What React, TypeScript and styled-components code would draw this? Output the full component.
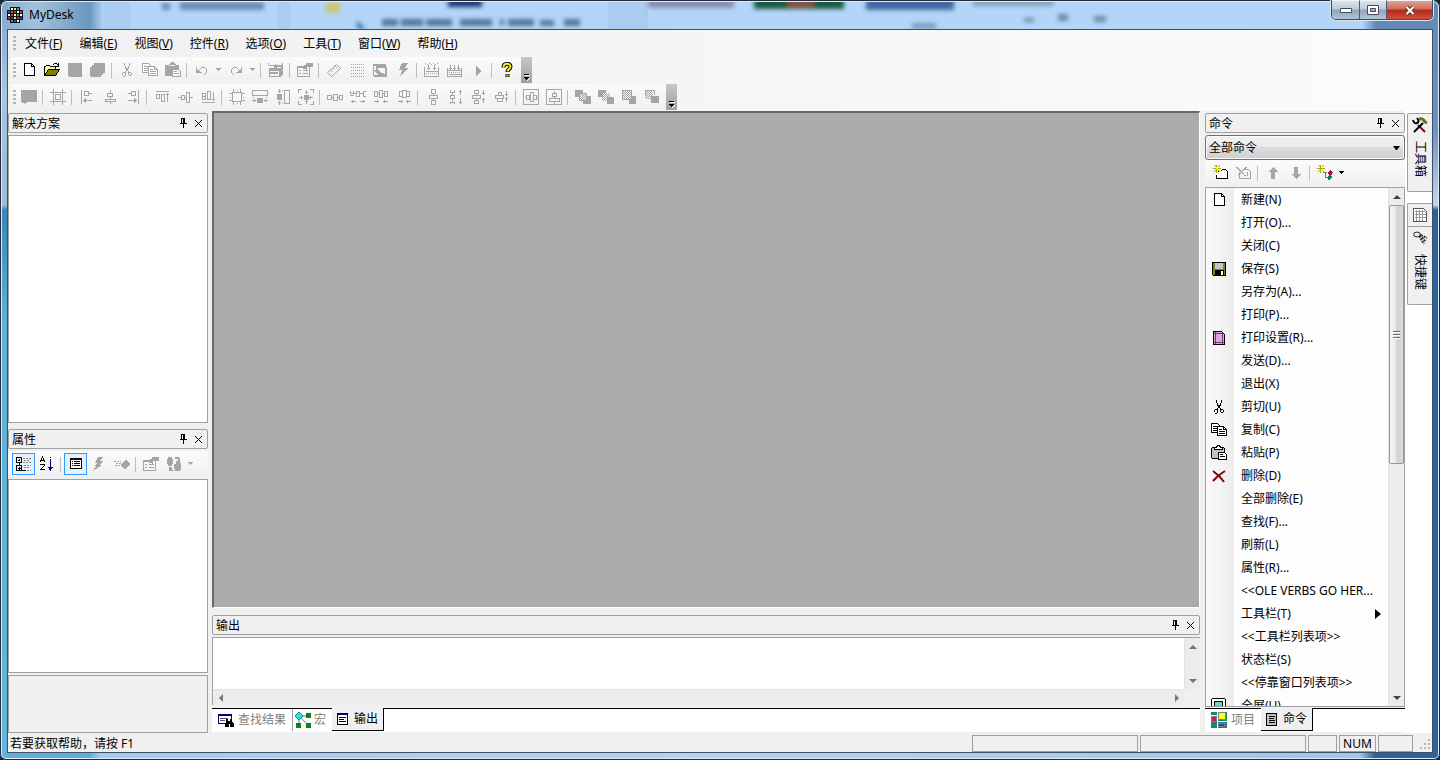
import React, { ReactNode } from 'react';
import styled, { createGlobalStyle, css } from 'styled-components';

const GlobalStyle = createGlobalStyle`
  * { box-sizing: border-box; }
  body {
    margin: 0;
    overflow: hidden;
    background: #16243a;
    color: #000;
    font: 12px/16px "Noto Sans", "Noto Sans CJK SC", sans-serif;
  }
  button, select, textarea { font: inherit; color: inherit; }
  button { padding: 0; border: 0; background: none; }
`;

/* ---------- glyphs, drawn on a 16px grid ---------- */

const newDoc = (
  <>
    <path fill="#fff" d="M3.5 1.5h7l3 3v9h-10z" />
    <path d="M10.5 1.5v3h3" />
  </>
);

const handle = 'M.5 6.5h4v4h-4z M5 8.5h1 M6.5 5.5h4v6h-4z M11 8.5h1 M12.5 6.5h3v4h-3z';
const checker = (x: number, y: number) => {
  let d = '';
  for (let r = 0; r < 8; r++) for (let c = r % 2; c < 8; c += 2) d += `M${x + c} ${y + r}h1v1h-1z`;
  return <path d={d} fill="currentColor" stroke="none" />;
};

const glyphs: Record<string, ReactNode> = {
  app: (
    <>
      <path fill="#101018" stroke="none" d="M3 0h10v3h3v10h-3v3h-10v-3h-3v-10h3z" />
      <path fill="#fff" stroke="none" d="M4 1h2v2h-2z M1 7h2v2h-2z M7 7h2v2h-2z M13 7h2v2h-2z M10 13h2v2h-2z M10 4h2v2h-2z" />
      <path fill="#e3262a" stroke="none" d="M7 4h2v2h-2z M13 4h2v2h-2z M4 7h2v2h-2z M10 10h2v2h-2z M1 10h2v2h-2z" />
      <path fill="#2b3fe0" stroke="none" d="M1 4h2v2h-2z M4 10h2v2h-2z M13 10h2v2h-2z M7 13h2v2h-2z" />
      <path fill="#22b14c" stroke="none" d="M10 1h2v2h-2z M4 4h2v2h-2z M10 7h2v2h-2z M4 13h2v2h-2z" />
      <path fill="#f4e53a" stroke="none" d="M7 1h2v2h-2z M7 10h2v2h-2z" />
    </>
  ),
  newDoc,
  open: (
    <>
      <path fill="#ffff9a" d="M0.5 13.5v-9h1l1-1h3l1 1h5v3" />
      <path fill="#808000" d="M0.5 13.5l4-6h11l-4 6z" />
      <path d="M9 2.5h1 M10 1.5h3 M13 2.5h1 M14.5 1v4 M12 4.5h3" />
    </>
  ),
  save: <path fill="currentColor" stroke="none" d="M1 1h14v14h-13l-1-1z" />,
  saveAll: <path fill="currentColor" stroke="none" d="M4 1h11v10h-2v2h-2v2h-10l-1-1v-9h2v-2h2z" />,
  cut: (
    <path d="M5.5 1v3 M10.5 1v3 M6.5 4v3 M9.5 4v3 M7.5 6v3 M8.5 6v3 M6.5 8.5v2 M9.5 8.5v2 M3.5 11v2 M4 10.5h2 M6.5 11v3 M4 14.5h2 M9.5 11v2 M10 10.5h2 M12.5 11v2 M10 13.5h2" />
  ),
  copy: (
    <>
      <path fill="#fff" d="M0.5 1.5h6l2 2v7h-8z" />
      <path d="M2 4.5h4 M2 6.5h4 M2 8.5h4" />
      <path fill="#fff" d="M6.5 4.5h6l3 3v6h-9z" />
      <path d="M12.5 4.5v3h3 M8 7.5h3 M8 9.5h6 M8 11.5h6" />
    </>
  ),
  paste: (
    <>
      <path fill="#c3c3b8" d="M0.5 3.5l1-1h11l1 1v10h-12l-1-1z" />
      <path fill="#fff" d="M3.5 4.5v-2h2l1-2h2l1 2h2v2z" />
      <path fill="#fff" d="M7.5 7.5h6l2 2v5h-8z" />
      <path d="M9 9.5h3 M9 11.5h5" />
    </>
  ),
  pasteOff: (
    <>
      <path fill="currentColor" stroke="none" d="M0 3h4l2-3h3l2 3h3v4h-7v7h-7z" />
      <path fill="#f6f6f6" stroke="none" d="M4 3h6v1h-6z" />
      <path fill="#f6f6f6" d="M7.5 7.5h6l2 2v5h-8z" />
      <path d="M9 9.5h3 M9 11.5h5" />
    </>
  ),
  undo: <path d="M2.5 5v6 M2 10.5h6 M3 9.5h3 M3.5 8v2 M4 8.5h1 M5 7.5h1 M6 6.5h1 M7 5.5h4 M11 6.5h1 M12.5 7v4 M11 11.5h1 M10 12.5h1" />,
  redo: <path d="M13.5 5v6 M8 10.5h6 M10 9.5h3 M12.5 8v2 M11 8.5h1 M10 7.5h1 M9 6.5h1 M5 5.5h4 M4 6.5h1 M3.5 7v4 M4 11.5h1 M5 12.5h1" />,
  drop: <path fill="currentColor" stroke="none" d="M0 6h5v1h-1v1h-1v1h-1v-1h-1v-1h-1z" />,
  deploy: (
    <>
      <path d="M.5 1v2 M1 3.5h6 M7.5 2v3 M14.5 1v6" />
      <path fill="currentColor" stroke="none" d="M6 3h9v1h-1v1h-5v1h-3z M1 6h11l3-2v3l-2 2h-12z M1 9h1v6h-1z M2 14h9v1h-9z M11 9h4v3l-2 3h-2z" />
      <path fill="currentColor" stroke="none" d="M2 10h8v2h-8z" />
    </>
  ),
  props: (
    <>
      <path d="M.5 4.5h12v10h-12z M1 5.5h6 M2 8.5h2 M6 8.5h5 M2 11.5h2 M6 11.5h5" />
      <path fill="currentColor" stroke="none" d="M5 4h2v-1h2v-2h7v4h-6v3h-1v-1h-3z" />
    </>
  ),
  ruler: <path shapeRendering="auto" d="M1.5 10.5l9-8 4 4-9 8z M4.5 8l2 2 M7 6l1.5 1.5 M9 4l2 2" />,
  dots: <path strokeDasharray="1 1" d="M2 2.5h13 M2 5.5h13 M2 8.5h13 M2 11.5h13 M2 14.5h13" />,
  swap: (
    <>
      <path fill="currentColor" stroke="none" d="M1 2h13v3h1v10h-13l-1-3z" />
      <path fill="#f6f6f6" stroke="none" d="M2 4h2v4h-2z M6 6h7v6l-3-1-4-3z M2 9l4 4h-4z" />
    </>
  ),
  bolt: <path fill="currentColor" stroke="none" d="M7 1h6l-3 5h3l-8 9 2-7h-3z" />,
  build: (
    <path d="M1 1.5h1 M5 1.5h1 M9 1.5h1 M13 1.5h1 M3 2.5h1 M7 2.5h1 M11 2.5h1 M.5 5v9.5h14v-9.5 M4.5 3v5 M3 6.5h3 M10.5 3v5 M9 6.5h3 M2 9.5h12 M2 11.5h1 M4 11.5h1 M6 11.5h1 M8 11.5h1 M10 11.5h1 M12 11.5h1" />
  ),
  rebuild: (
    <path d="M.5 6v8.5h14v-8.5 M3.5 3v5 M2 6.5h3 M7.5 3v5 M6 6.5h3 M11.5 3v5 M10 6.5h3 M1 8.5h14 M2 10.5h1 M4 10.5h1 M6 10.5h1 M8 10.5h1 M10 10.5h1 M12 10.5h1 M2 12.5h12" />
  ),
  play: <path fill="currentColor" stroke="none" d="M6 4l5 5-5 5z" />,
  help: (
    <>
      <path shapeRendering="auto" strokeWidth="4" d="M4.5 5.5c0-5 7-4.5 7-1 0 2.5-3 2.5-3 5.5 M8.5 12v3" />
      <path shapeRendering="auto" stroke="#ffee20" strokeWidth="2" d="M4.5 5.5c0-5 7-4.5 7-1 0 2.5-3 2.5-3 5 M8.5 12.5v2" />
    </>
  ),
  comment: <path fill="currentColor" stroke="none" d="M0 1h16v12h-10v1h-2v1h-1v-1h-2v-1h-1z" />,
  grid: <path d="M3.5 0v16 M12.5 0v16 M0 3.5h16 M0 12.5h16 M5.5 5.5h5v5h-5z" />,
  left: <path d="M2.5 1v14 M5.5 2.5h4v4h-4z M9 4.5h4 M4 11.5h9 M5.5 10v3 M6.5 9v5" />,
  center: <path d="M8.5 1v3 M5.5 4.5h5v3h-5z M8.5 8v2 M3.5 10.5h10v2h-10z M8.5 13v2" />,
  right: <path d="M13.5 1v14 M6.5 2.5h4v4h-4z M3 4.5h4 M3 11.5h9 M10.5 10v3 M9.5 9v5" />,
  top: <path d="M2 2.5h13 M2.5 5.5h3v4h-3z M7.5 5.5h3v7h-3z M13.5 4v9 M12 5.5h3" />,
  middle: <path d="M1 8.5h3 M4.5 6.5h3v4h-3z M8 8.5h1 M9.5 3.5h3v10h-3z M13 8.5h3" />,
  bottom: <path d="M2 13.5h13 M2.5 4.5h3v6h-3z M3 7.5h2 M7.5 2.5h3v8h-3z M13.5 3v9 M12 10.5h3" />,
  sizeGrid: <path d="M4.5 0v3 M11.5 0v3 M4.5 13v3 M11.5 13v3 M0 4.5h3 M13 4.5h3 M0 11.5h3 M13 11.5h3 M8 1.5h1 M8 14.5h1 M1 8.5h1 M14 8.5h1 M3.5 3.5h9v9h-9z" />,
  sameW: (
    <>
      <path d="M.5 1.5h15v5h-15z M1.5 8v1 M14.5 8v1 M0 11.5h4 M12 11.5h4 M2.5 10v3 M13.5 10v3" />
      <path fill="currentColor" stroke="none" d="M5 9h6v5h-6z" />
    </>
  ),
  sameH: (
    <>
      <path d="M9.5 1.5h5v13h-5z M7 1.5h1 M7 14.5h1 M4.5 0v4 M4.5 12v4 M3 2.5h3 M3 13.5h3" />
      <path fill="currentColor" stroke="none" d="M2 5h5v6h-5z" />
    </>
  ),
  sameBoth: (
    <>
      <path d="M.5 4v-3.5h3.5 M12 .5h3.5v3.5 M.5 12v3.5h3.5 M12 15.5h3.5v-3.5 M8.5 1v4 M7 3.5h3 M8.5 11v4 M7 12.5h3 M1 8.5h4 M3.5 7v3 M11 8.5h4 M12.5 7v3" />
      <path fill="currentColor" stroke="none" d="M6 6h5v5h-5z" />
    </>
  ),
  hEqual: <path d={handle} />,
  hMore: <path d="M.5 2v2h3v-2 M.5 7v-1h3v1 M3 4.5h3 M6.5 2.5h3v5h-3z M10 4.5h3 M15.5 2.5h-2v5h2 M1 12.500h5 M2.500 11v3 M10 12.500h5 M13.500 11v3" />,
  hLess: <path d="M1.5 2.5h3v5h-3z M5 4.5h1 M6.5 1.5h3v7h-3z M10 4.5h1 M11.5 2.5h3v5h-3z M1 12.5h5 M4.5 11v3 M10 12.5h5 M11.5 11v3" />,
  hNone: <path d="M3.5 2.5h3v5h-3z M6.5 1.5h4v7h-4z M10.5 2.5h3v5h-3z M2 12.5h5 M5.5 11v3 M10 12.5h5 M11.5 11v3" />,
  vEqual: <path d="M6.5 .5h4v4h-4z M8.5 5v1 M4.5 6.5h8v3h-8z M8.5 10v1 M6.5 11.5h4v4h-4z" />,
  vMore: <path d="M2.5 1v2h4v-2 M4.5 3v3 M2.5 6.5h4v3h-4z M4.5 10v3 M2.5 15v-2h4v2 M12.5 1v5 M11 2.5h3 M12.5 9v6 M11 13.5h3" />,
  vLess: <path d="M3.5 1.5h4v3h-4z M5.5 5v1 M1.5 6.5h8v3h-8z M5.5 10v1 M3.5 11.5h4v3h-4z M12.5 1v5 M11 4.5h3 M12.5 9v5 M11 10.5h3" />,
  vNone: <path d="M4.5 3.5h3v3h-3z M1.5 6.5h8v3h-8z M3.5 9.5h5v3h-5z M12.5 2v5 M11 5.5h3 M12.5 8v5 M11 9.5h3" />,
  midH: <path d="M.5 .5h15v15h-15z M2 8.5h1 M3.5 6.5h3v4h-3z M7.5 3.5h3v9h-3z M11 6.5h2v4h-2 M13 8.5h2" />,
  midV: <path d="M.5 .5h15v15h-15z M8.5 2v2 M6.5 4.5h4v3h-4z M8.5 8v1 M3.5 9.5h10v3h-10z M8.5 13v2" />,
  front: (
    <>
      <path fill="currentColor" stroke="none" d="M0 1h8v3h-4v4h-4z M12 7h4v8h-8v-3h4z" />
      <path d="M4.5 4.5h7v7h-7z" />
      {checker(4, 4)}
    </>
  ),
  forward: (
    <>
      <path fill="currentColor" stroke="none" d="M0 1h8v3h-3v4h-5z M9 8h7v7h-7z" />
      {checker(4, 4)}
    </>
  ),
  backward: (
    <>
      <path fill="currentColor" stroke="none" d="M11 7h4v8h-7v-4h3z" />
      <path d="M1.5 1.5h9v9h-9z" />
      {checker(2, 2)}
    </>
  ),
  back: (
    <>
      <path fill="currentColor" stroke="none" d="M7 7h8v7h-8z" />
      <path d="M1.5 6v-4.5h9v4.5" />
      {checker(1, 2)}
    </>
  ),
  pin: <path d="M5.5 2v6 M5 2.5h4 M7.5 2v6 M8.5 2v6 M4 7.5h7 M7.5 8v4" />,
  close: <path shapeRendering="auto" strokeWidth="1" d="M4 4l7 7M11 4l-7 7" />,
  category: (
    <>
      <path d="M.5 1.5h5v5h-5z M2 4.5h2 M3.5 3v2 M3.5 7v2 M.5 9.5h5v5h-5z M2 12.5h3 M3.5 11v3 M6 14.5h4" />
      <path stroke="#888" strokeDasharray="2 1" d="M7 2.5h8 M8 4.5h6 M7 6.5h8 M8 9.5h7 M8 11.5h6 M11 14.5h4" />
    </>
  ),
  sort: (
    <>
      <path d="M3.5 0v2 M2.5 2v2 M4.5 2v2 M1.5 4v2 M5.5 4v2 M2 4.5h3 M1 8.5h5 M5 9.5h1 M4 10.5h1 M3 11.5h1 M2 12.5h1 M1 13.5h5" />
      <path stroke="#000080" d="M11.5 1v1 M11.5 3v12 M9 11.5h5 M10 12.5h3 M10.5 12v2" />
    </>
  ),
  sheet: (
    <>
      <path fill="#fff" d="M2.5 2.5h11v10h-11z" />
      <path stroke="#000080" d="M2 3.5h12" />
      <path d="M4 5.5h1 M4 7.5h1 M4 9.5h1 M6 5.5h6 M6 7.5h6 M6 9.5h6" />
    </>
  ),
  bolts: <path fill="currentColor" stroke="none" d="M7 1h5l-4 4h5l-5 4h3l-9 6 3-5h-2l3-3h-2z" />,
  event: (
    <>
      <path fill="currentColor" stroke="none" d="M7 8l5-5 4 5-4 5h-2z" />
      <path strokeDasharray="2 1" d="M0 5.5h7 M2 7.5h5 M1 9.5h7" />
    </>
  ),
  peers: <path fill="currentColor" stroke="none" d="M2 1h4v2h1v5h-1v2h-4v-2h-1v-5h1z M10 5h4v2h1v7h-1v1h-5v-2h-1v-5h2z M9 1h4v1h1v3h-2v-2h-3z M3 11h3v3h2v1h-5z" />,
  newCmd: (
    <>
      <path fill="#fff" d="M4.5 6.5h1 M7.5 6.5l2-2h3l2 2v7h-11v-4" />
      <path stroke="#a8a800" d="M3.5 0v8 M0 3.5h8 M1 .5h1 M2 1.5h1 M5 1.5h1 M6 .5h1 M1 6.5h1 M2 5.5h1 M5 5.5h1 M6 6.5h1" />
      <path stroke="#ffff30" d="M3 3.5h2 M3.5 2v1 M5 2.5h1" />
    </>
  ),
  delCmd: <path d="M3.5 6.5v7h11v-7l-2-2h-4 M0 2.5h2 M1 3.5h2 M2 4.5h2 M3 5.5h2 M4 6.5h2 M5 7.5h2 M6 8.5h2 M8 10.5h2 M9 2.5h2 M8 3.5h2 M7 4.5h2 M6 5.5h2 M3 8.5h2 M2 9.5h2 M11 7v4" />,
  up: <path fill="currentColor" stroke="none" d="M8 2l5 5h-3v7h-4v-7h-3z" />,
  down: <path fill="currentColor" stroke="none" d="M6 2h4v7h3l-5 5-5-5h3z" />,
  magic: (
    <>
      <path stroke="#a8a800" d="M3.5 0v8 M0 3.5h8 M1 .5h1 M2 1.5h1 M5 1.5h1 M6 .5h1 M1 6.5h1 M2 5.5h1 M5 5.5h1 M6 6.5h1" />
      <path stroke="#777" d="M6 7.5h4 M8.5 8v4h2" />
      <path fill="#b01030" stroke="none" d="M11 8l2-3 3 2-2 4-2-1z" />
      <path fill="#107860" stroke="none" d="M10 12l3-2 2 2-3 4z" />
    </>
  ),
  floppy: (
    <>
      <path fill="#808020" d="M1.5 1.5h13v13h-12l-1-1z" />
      <path fill="#c4c4c4" stroke="none" d="M4 2h8v6h-8z" />
      <path fill="#000" stroke="none" d="M4 9h9v6h-9z" />
      <path fill="#fff" stroke="none" d="M10 10h2v4h-2z" />
    </>
  ),
  pageSetup: (
    <>
      <path fill="#d8a8d8" d="M2.5 1.5h8l3 3v10h-11z" />
      <path stroke="#803080" d="M4.5 2v12 M11.5 3v11 M3 3.5h8 M3 12.5h10" />
    </>
  ),
  remove: <path shapeRendering="auto" stroke="#800000" strokeWidth="2" d="M2 3q7 5 11 11M14 3q-7 4-12 10" />,
  screen: (
    <>
      <path fill="#fff" d="M.5 1.5l1-1h12l1 1v13h-14z" />
      <path fill="#60d8c8" d="M3.5 3.5h8v7h-8z" />
    </>
  ),
  tools: (
    <>
      <path shapeRendering="auto" stroke="#800000" strokeWidth="2" d="M6 8l7 7" />
      <path shapeRendering="auto" strokeWidth="2" d="M1 3q1 4 4 3t0-5 M2 15l9-9" />
      <path shapeRendering="auto" stroke="#707020" strokeWidth="3" d="M7 2q4-1 6 3l2 1" />
    </>
  ),
  gridPage: (
    <>
      <path stroke="#555" fill="#fff" d="M1.5 1.5h10l3 3v10h-13z" />
      <path stroke="#999" d="M3 4.5h10 M3 7.5h11 M3 10.5h11 M4.5 3v11 M7.5 3v11 M10.5 3v11" />
    </>
  ),
  keys: (
    <>
      <path shapeRendering="auto" stroke="#333" d="M2 3l3-1 3 1v3l-3 1-3-1z" />
      <path shapeRendering="auto" stroke="#333" strokeWidth="2" strokeDasharray="2 1" d="M7 6l5 8 M8 5l6 7 M9 5l6 3" />
    </>
  ),
  find: (
    <>
      <path fill="#fff" stroke="#000080" d="M.5 2.5h13v9h-13z M0 3.5h14" />
      <path stroke="#555" d="M2 6.5h8 M2 8.5h5" />
      <path fill="#000" stroke="none" d="M8 7h2v2h2v-2h2v3h1v1h1v4h-4v-3h-1v3h-4v-4h1z" />
    </>
  ),
  macro: (
    <>
      <path stroke="#777" shapeRendering="auto" d="M4 4h9M4 4v10M4 4l9 9" />
      <path fill="#20e8e8" stroke="#108888" shapeRendering="auto" d="M4 0l4 4-4 4-4-4z" />
      <path fill="#108018" stroke="none" d="M11 1h5v5h-5z M11 11h5v5h-5z M1 11h5v5h-5z" />
    </>
  ),
  output: (
    <>
      <path fill="#fff" d="M2.5 2.5h10v11h-10z" />
      <path stroke="#000080" d="M2 3.5h11" />
      <path d="M4 6.5h7 M4 8.5h5 M4 10.5h7" />
    </>
  ),
  project: (
    <>
      <path fill="#208078" stroke="none" d="M0 0h16v16h-16z" />
      <path fill="#fff" stroke="none" d="M0 3h7v1h-7z M6 0h1v16h-1z M7 9h9v1h-9z" />
      <path fill="#e01050" d="M.5 4.5h5v5h-5z" />
      <path fill="#ffff20" d="M7.5 .5h7v7h-7z" />
      <path fill="#2040e0" d="M7.5 11.5h6v3h-6z" />
    </>
  ),
  command: (
    <>
      <path fill="#c0c0c0" d="M2.5 2.5h10v12h-10z" />
      <path d="M5 5.5h6 M5 7.5h5 M5 9.5h6 M5 11.5h6 M12.5 3v12" />
    </>
  ),
};

const Svg = styled.svg`
  display: block;
  flex: none;
`;

const Icon = ({ name, width = 16 }: { name: string; width?: number }) => (
  <Svg width={width} height="16" viewBox={`0 0 ${width} 16`} fill="none" stroke="currentColor" shapeRendering="crispEdges" aria-hidden>
    {glyphs[name]}
  </Svg>
);

/* ---------- window frame ---------- */

const Frame = styled.div`
  height: 100vh;
  min-height: 480px;
  padding: 0 7px 7px;
  display: flex;
  flex-direction: column;
  border-radius: 7px 7px 6px 6px;
  position: relative;
  isolation: isolate;
  background:
    linear-gradient(#7fa8cc, #a9c4de 90px, #9cbcd8 205px, #3a86bc 210px, #5fb0d8 320px, #62b4da) left / 8px 100% no-repeat,
    linear-gradient(#6389b8, #6f93c0 130px, #c2d6ea 205px, #2a62a0 210px, #2a62a0) right / 8px 100% no-repeat,
    linear-gradient(90deg, #5fb0d8 90px, #a9c8f0 100px, #b8d2ee 50%, #a3c4ea 1360px, #2a62a0 1375px) bottom / 100% 8px no-repeat,
    #a9cdf0;
  box-shadow: inset 0 0 0 1px #232a3a, inset 0 0 0 2px #dcecf8;
`;

const Backdrop = styled.svg`
  position: absolute;
  inset: 2px 8px auto 8px;
  width: calc(100% - 16px);
  height: 27px;
  z-index: -1;
`;

const TitleBar = styled.header`
  flex: none;
  height: 29px;
  display: flex;
  align-items: center;
  gap: 6px;
`;

const Title = styled.h1`
  margin: 0;
  flex: 1;
  font-size: 12px;
  font-weight: 400;
`;

const CaptionButtons = styled.div`
  align-self: flex-start;
  display: flex;
  border: 1px solid #3c4a60;
  border-top: 0;
  border-radius: 0 0 5px 5px;
  overflow: hidden;
  box-shadow: 0 0 0 1px #dbe8f4;
`;

const CaptionButton = styled.button<{ $close?: boolean }>`
  width: ${p => (p.$close ? 46 : 27)}px;
  height: 19px;
  display: grid;
  place-items: center;
  border-top: 1px solid #eef4fa;
  background: ${p =>
    p.$close
      ? 'linear-gradient(#e0a292, #cf6a58 45%, #b3281a 50%, #d0513c)'
      : 'linear-gradient(#dbe4ee, #bccbdb 45%, #8fa3b9 50%, #b4c6d8)'};
  & + & { border-left: 1px solid #4a5a70; }
`;

const Client = styled.div`
  flex: 1;
  min-height: 0;
  display: flex;
  flex-direction: column;
  border: 1px solid #3d5068;
  background: #f0f0f0;
`;

/* ---------- menus and tool bars ---------- */

const Bars = styled.div`
  flex: none;
  padding-left: 3px;
  background: linear-gradient(90deg, #f0f0f0, #fbfbfb);
`;

const Gripper = styled.span`
  width: 3px;
  height: 15px;
  margin: 0 1px 0 2px;
  background: repeating-linear-gradient(#b4b4b4 0 2px, transparent 2px 4px);
`;

const MenuBar = styled.nav`
  height: 27px;
  display: flex;
  align-items: center;
`;

const MenuItem = styled.button`
  height: 21px;
  padding: 0 8px;
  & + & { margin-left: 1px; }
`;

const ToolBar = styled.div`
  width: max-content;
  height: 26px;
  margin-bottom: 1px;
  display: flex;
  align-items: center;
  background: linear-gradient(#fbfbfb, #f0f0f0);
  border-radius: 2px 0 0 2px;
`;

const Tool = styled.button<{ $off?: boolean; $on?: boolean; $slim?: boolean }>`
  width: ${p => (p.$slim ? 11 : 23)}px;
  height: 22px;
  flex: none;
  display: grid;
  place-items: center;
  color: ${p => (p.$off ? '#a5a5a5' : '#000')};
  ${p => p.$on && css`border: 1px solid #3399ff; background: #e6f1fb;`}
`;

const Separator = styled.span`
  width: 1px;
  height: 15px;
  margin: 0 3px 0 2px;
  background: #bdbdbd;
`;

const Overflow = styled.button`
  width: 11px;
  height: 26px;
  margin-left: 3px;
  display: flex;
  align-items: flex-end;
  justify-content: center;
  padding-bottom: 2px;
  background: linear-gradient(#c6c6c6, #a0a0a0);
`;

/* "|" is a separator, "v" a drop-down arrow, a leading "*" marks an enabled command */
const standardTools = [
  '*newDoc', '*open', 'save', 'saveAll', '|', 'cut', 'copy', 'pasteOff', '|', 'undo', 'v', 'redo', 'v', '|', 'deploy', '|',
  'props', '|', 'ruler', 'dots', 'swap', 'bolt', '|', 'build', 'rebuild', 'play', '|', '*help',
];
const layoutTools = [
  'comment', '|', 'grid', '|', 'left', 'center', 'right', '|', 'top', 'middle', 'bottom', '|', 'sizeGrid', 'sameW', 'sameH',
  'sameBoth', '|', 'hEqual', 'hMore', 'hLess', 'hNone', '|', 'vEqual', 'vMore', 'vLess', 'vNone', '|', 'midH', 'midV', '|',
  'front', 'forward', 'backward', 'back',
];

const ToolStrip = ({ label, items }: { label: string; items: string[] }) => (
  <ToolBar role="toolbar" aria-label={label}>
    <Gripper />
    {items.map((item, i) => {
      if (item === '|') return <Separator key={i} />;
      if (item === 'v') return <Tool key={i} $off $slim aria-label="更多"><Icon name="drop" width={5} /></Tool>;
      const on = item[0] === '*';
      const name = on ? item.slice(1) : item;
      return <Tool key={i} $off={!on} aria-label={name}><Icon name={name} /></Tool>;
    })}
    <Overflow aria-label="工具栏选项">
      <svg width="7" height="7" viewBox="0 0 7 7" shapeRendering="crispEdges">
        <path d="M1 0h5v1h-5z M1 3h5v1h-1v1h-1v1h-1v-1h-1v-1h-1z" />
        <path fill="#fff" d="M2 1h5v1h-5z M6 4h1v1h-1z M5 5h1v1h-1z M4 6h1v1h-1z" />
      </svg>
    </Overflow>
  </ToolBar>
);

/* ---------- docked panels ---------- */

const Workspace = styled.main`
  flex: 1;
  min-height: 0;
  display: grid;
  grid-template-columns: 200px minmax(0, 1fr) 200px 27px;
`;

const Column = styled.div`
  min-height: 0;
  display: flex;
  flex-direction: column;
  padding-top: 2px;
`;

const CenterColumn = styled.div`
  min-height: 0;
  display: flex;
  flex-direction: column;
  margin: 0 5px 0 4px;
`;

const Caption = styled.div`
  flex: none;
  height: 20px;
  padding: 2px 1px 0 3px;
  display: flex;
  align-items: center;
  border: 1px solid #a0a0a0;
  border-radius: 2px;
`;

const CaptionText = styled.h2`
  margin: 0;
  flex: 1;
  font-size: 12px;
  font-weight: 400;
`;

const Box = styled.div<{ $size?: number; $grey?: boolean }>`
  ${p => (p.$size ? css`height: ${p.$size}px; flex: none;` : css`flex: 1; min-height: 0;`)}
  border: 1px solid #a0a0a0;
  background: ${p => (p.$grey ? '#f0f0f0' : '#fff')};
`;

const Section = styled.section<{ $size?: number }>`
  ${p => (p.$size ? css`height: ${p.$size}px; flex: none;` : css`flex: 1; min-height: 0;`)}
  display: flex;
  flex-direction: column;
  gap: 2px;
`;

const PropertySection = styled(Section)`
  margin-top: 6px;
`;

const PanelTools = styled.div`
  flex: none;
  height: 26px;
  padding-left: 4px;
  display: flex;
  align-items: center;
  background: linear-gradient(#fbfbfb, #f0f0f0);
`;

const PinButton = styled.button`
  width: 15px;
  height: 16px;
`;

const PanelCaption = ({ title }: { title: string }) => (
  <Caption>
    <CaptionText>{title}</CaptionText>
    <PinButton aria-label="自动隐藏"><Icon name="pin" width={15} /></PinButton>
    <PinButton aria-label="关闭"><Icon name="close" width={15} /></PinButton>
  </Caption>
);

const MdiArea = styled.div`
  flex: 1;
  min-height: 0;
  margin-bottom: 7px;
  background: #ababab;
  border: solid;
  border-width: 2px 1px 1px 2px;
  border-color: #696969 #fff #fff #696969;
`;

const OutputBox = styled.div`
  flex: 1;
  min-height: 0;
  display: grid;
  grid-template-columns: minmax(0, 1fr) 16px;
  grid-template-rows: minmax(0, 1fr) 16px;
  border: solid #a0a0a0;
  border-width: 1px 0 0 1px;
  background: #f0f0f0;
`;

const OutputText = styled.textarea`
  border: 0;
  padding: 2px 4px;
  resize: none;
  overflow: hidden;
  outline: 0;
  background: #fff;
`;

const Scroll = styled.div<{ $row?: boolean }>`
  display: flex;
  flex-direction: ${p => (p.$row ? 'row' : 'column')};
  justify-content: space-between;
  align-items: center;
  background: #ececec;
  border: solid #e2e2e2;
  border-width: ${p => (p.$row ? '1px 0 0 0' : '0 0 0 1px')};
`;

const ScrollButton = styled.button`
  width: 15px;
  height: 17px;
  flex: none;
  display: grid;
  place-items: center;
`;

const arrows = {
  up: 'M0 6L4 2L8 6z',
  down: 'M0 2L4 6L8 2z',
  left: 'M6 0L2 4L6 8z',
  right: 'M2 0L6 4L2 8z',
};

const Arrow = ({ dir, label, color = '#777' }: { dir: keyof typeof arrows; label: string; color?: string }) => (
  <ScrollButton aria-label={label}>
    <svg width="8" height="8" viewBox="0 0 8 8"><path fill={color} d={arrows[dir]} /></svg>
  </ScrollButton>
);

const Thumb = styled.div`
  width: 15px;
  flex: 0 0 50%;
  margin-bottom: auto;
  display: grid;
  place-items: center;
  border: 1px solid #979797;
  border-radius: 2px;
  background: linear-gradient(90deg, #f6f6f6, #e6e6e6 48%, #d0d0d0 52%, #dedede);
  &::before {
    content: '';
    width: 7px;
    height: 8px;
    background: repeating-linear-gradient(#666 0 1px, #fff 1px 2px, transparent 2px 3px);
  }
`;

/* ---------- tabs ---------- */

const TabRow = styled.div<{ $close?: boolean }>`
  flex: none;
  height: 24px;
  margin: ${p => (p.$close ? 1 : 3)}px 0 1px;
  display: flex;
  background: #fff;
  border-top: 1px solid #000;
`;

const Tab = styled.button<{ $active?: boolean; $divided?: boolean }>`
  height: 22px;
  display: flex;
  align-items: center;
  gap: 4px;
  padding: 0 6px;
  color: #808080;
  ${p => p.$divided && css`
    border-right: 1px solid #a0a0a0;
    & + button { padding-left: 2px; gap: 3px; }
  `}
  ${p => p.$active && css`
    height: 23px;
    margin-top: -1px;
    padding: 0 5px 0 3px;
    gap: 3px;
    color: #000;
    background: #f0f0f0;
    border: solid #000;
    border-width: 0 1px 1px 0;
  `}
`;

const SideStrip = styled.aside`
  padding: 2px 0 0 2px;
  display: flex;
  flex-direction: column;
  gap: 11px;
  background: #fff;
`;

const SideGroup = styled.div`
  border: 1px solid #a0a0a0;
  border-right: 0;
  border-radius: 2px 0 0 2px;
  background: #f0f0f0;
`;

const SideTab = styled.button<{ $rule?: boolean }>`
  width: 100%;
  min-height: 23px;
  padding-top: 3px;
  display: flex;
  flex-direction: column;
  align-items: center;
  gap: 8px;
  ${p => p.$rule && css`border-bottom: 1px solid #a0a0a0;`}
`;

const SideLabel = styled.span`
  writing-mode: vertical-rl;
  text-orientation: sideways;
  padding-bottom: 14px;
`;

/* ---------- command panel ---------- */

const CommandPane = styled.div`
  flex: 1;
  min-height: 0;
  display: flex;
  flex-direction: column;
`;

const SelectWrap = styled.div`
  position: relative;
  flex: none;
  height: 25px;
  svg { position: absolute; right: 5px; top: 11px; pointer-events: none; }
`;

const CommandSelect = styled.select`
  width: 100%;
  height: 100%;
  padding: 0 20px 0 3px;
  appearance: none;
  border: 1px solid #707070;
  border-radius: 3px;
  background: linear-gradient(#f2f2f2, #ebebeb 49%, #dddddd 50%, #cfcfcf);
  box-shadow: inset 0 0 0 1px #fafafa;
`;

const CommandBox = styled.div`
  flex: 1;
  min-height: 0;
  display: flex;
  margin-top: 1px;
  border: 1px solid #a0a0a0;
  background: #fdfdfd;
`;

const CommandList = styled.ul`
  flex: 1;
  min-width: 0;
  margin: 0;
  padding: 0;
  list-style: none;
  overflow: hidden;
  background: linear-gradient(90deg, #fafafa, #ececec 28px, #fdfdfd 28px);
`;

const Command = styled.button`
  width: 100%;
  height: 23px;
  padding-right: 3px;
  display: flex;
  align-items: center;
  text-align: left;
  white-space: nowrap;
`;

const CommandIcon = styled.span`
  width: 30px;
  padding-left: 5px;
  margin-right: 5px;
  flex: none;
`;

const CommandLabel = styled.span`
  flex: 1;
`;

/* ---------- status bar ---------- */

const StatusBar = styled.footer`
  flex: none;
  height: 19px;
  padding: 2px 0 0 2px;
  display: flex;
  gap: 2px;
`;

const StatusText = styled.span`
  flex: 1;
  line-height: 17px;
`;

const Pane = styled.span<{ $w: number }>`
  width: ${p => p.$w}px;
  height: 17px;
  border: 1px solid #a0a0a0;
  text-align: center;
  line-height: 15px;
`;

const SizeGrip = styled.span`
  width: 17px;
  height: 16px;
  display: grid;
  place-items: end;
`;

const menus: [string, string][] = [
  ['文件', 'F'], ['编辑', 'E'], ['视图', 'V'], ['控件', 'R'], ['选项', 'O'], ['工具', 'T'], ['窗口', 'W'], ['帮助', 'H'],
];

const commands: { text: string; icon?: string; sub?: boolean }[] = [
  { text: '新建(N)', icon: 'newDoc' },
  { text: '打开(O)...' },
  { text: '关闭(C)' },
  { text: '保存(S)', icon: 'floppy' },
  { text: '另存为(A)...' },
  { text: '打印(P)...' },
  { text: '打印设置(R)...', icon: 'pageSetup' },
  { text: '发送(D)...' },
  { text: '退出(X)' },
  { text: '剪切(U)', icon: 'cut' },
  { text: '复制(C)', icon: 'copy' },
  { text: '粘贴(P)', icon: 'paste' },
  { text: '删除(D)', icon: 'remove' },
  { text: '全部删除(E)' },
  { text: '查找(F)...' },
  { text: '刷新(L)' },
  { text: '属性(R)...' },
  { text: '<<OLE VERBS GO HER...' },
  { text: '工具栏(T)', sub: true },
  { text: '<<工具栏列表项>>' },
  { text: '状态栏(S)' },
  { text: '<<停靠窗口列表项>>' },
  { text: '全屏(U)', icon: 'screen' },
];

export default function App() {
  return (
    <Frame>
      <GlobalStyle />
      <Backdrop viewBox="0 0 1424 27" preserveAspectRatio="none" aria-hidden>
        <defs>
          <filter id="soft" x="-20%" y="-80%" width="140%" height="260%"><feGaussianBlur stdDeviation="2" /></filter>
          <linearGradient id="edge" x1="0" x2="1">
            <stop offset="0" stopColor="#8ab0d2" />
            <stop offset=".3" stopColor="#a2c2dc" />
            <stop offset=".85" stopColor="#6a98c0" />
            <stop offset="1" stopColor="#b2d5f8" />
          </linearGradient>
          <linearGradient id="corner" x1="0" x2="1">
            <stop offset="0" stopColor="#b2d5f8" />
            <stop offset=".2" stopColor="#6488b4" />
          </linearGradient>
        </defs>
        <path fill="#b2d5f8" d="M0 0h1424v27h-1424z" />
        <path fill="#9fc3e8" opacity=".5" d="M92 0h30v27h-30z M270 0h12v27h-12z M600 0h40v27h-40z" />
        <path fill="url(#edge)" d="M0 0h96v27h-96z" />
        <path fill="url(#corner)" d="M1354 0h70v27h-70z" />
        <g filter="url(#soft)">
          <path fill="#6c8cb0" d="M172 0h84v8h-84z M154 1h8v7h-8z" />
          <path fill="#4a6c92" opacity=".9" d="M374 17h16v7h-16z M393 17h22v7h-22z M418 17h26v7h-26z M452 17h32v7h-32z M492 17h4v6h-4z M500 17h26v7h-26z M532 18h14v6h-14z M556 17h16v7h-16z" />
          <path fill="#203878" d="M440 -3h34v8h-34z" />
          <path fill="#888fb0" d="M640 -3h86v9h-86z" />
          <path fill="#1c5a40" d="M746 -4h90v11h-90z" />
          <path fill="#8a5048" d="M780 -4h26v9h-26z" />
          <path fill="#4468a4" d="M858 -4h88v12h-88z" />
          <path fill="#7fa5b8" d="M965 -4h80v8h-80z" />
          <path fill="#6c8cab" d="M1016 16h10v4h-10z M1050 12h10v7h-10z M1086 14h12v6h-12z" />
          <path fill="#7c9cc0" d="M904 21h24v6h-24z" />
          <path fill="#c8c878" d="M318 0h14v11h-14z" />
          <path fill="#3070b0" d="M348 18l10 9h-8z" />
        </g>
      </Backdrop>
      <TitleBar>
        <Icon name="app" />
        <Title>MyDesk</Title>
        <CaptionButtons>
          <CaptionButton aria-label="最小化">
            <svg width="12" height="6" viewBox="0 0 12 6"><path fill="#fff" stroke="#444c5c" d="M.5 1.5h11v4h-11z" /></svg>
          </CaptionButton>
          <CaptionButton aria-label="最大化">
            <svg width="12" height="10" viewBox="0 0 12 10"><path fill="#fff" fillRule="evenodd" stroke="#444c5c" d="M.5 .5h11v9h-11z M3.5 3.5h5v3h-5z" /></svg>
          </CaptionButton>
          <CaptionButton $close aria-label="关闭">
            <svg width="12" height="11" viewBox="0 0 12 11">
              <path stroke="#5a3038" strokeWidth="4" d="M2.5 2l7 7M9.5 2l-7 7" />
              <path stroke="#fff" strokeWidth="2" d="M2.5 2l7 7M9.5 2l-7 7" />
            </svg>
          </CaptionButton>
        </CaptionButtons>
      </TitleBar>

      <Client>
        <Bars>
          <MenuBar>
            <Gripper />
            {menus.map(([text, key]) => (
              <MenuItem key={key}>{text}(<u>{key}</u>)</MenuItem>
            ))}
          </MenuBar>
          <ToolStrip label="标准" items={standardTools} />
          <ToolStrip label="布局" items={layoutTools} />
        </Bars>

        <Workspace>
          <Column>
            <Section>
              <PanelCaption title="解决方案" />
              <Box />
            </Section>
            <PropertySection $size={304}>
              <PanelCaption title="属性" />
              <PanelTools role="toolbar" aria-label="属性">
                <Tool $on aria-label="按分类"><Icon name="category" /></Tool>
                <Tool aria-label="按字母"><Icon name="sort" /></Tool>
                <Separator />
                <Tool $on aria-label="属性"><Icon name="sheet" /></Tool>
                <Tool $off aria-label="事件"><Icon name="bolts" /></Tool>
                <Tool $off aria-label="消息"><Icon name="event" /></Tool>
                <Separator />
                <Tool $off aria-label="属性页"><Icon name="props" /></Tool>
                <Tool $off aria-label="关联"><Icon name="peers" /></Tool>
                <Tool $off $slim aria-label="更多"><Icon name="drop" width={5} /></Tool>
              </PanelTools>
              <Box />
              <Box $size={58} $grey />
            </PropertySection>
          </Column>

          <CenterColumn>
            <MdiArea />
            <Section $size={90}>
              <PanelCaption title="输出" />
              <OutputBox>
                <OutputText readOnly aria-label="输出" />
                <Scroll>
                  <Arrow dir="up" label="向上" />
                  <Arrow dir="down" label="向下" />
                </Scroll>
                <Scroll $row>
                  <Arrow dir="left" label="向左" />
                  <Arrow dir="right" label="向右" />
                </Scroll>
              </OutputBox>
            </Section>
            <TabRow role="tablist">
              <Tab role="tab" $divided><Icon name="find" />查找结果</Tab>
              <Tab role="tab"><Icon name="macro" />宏</Tab>
              <Tab role="tab" $active><Icon name="output" />输出</Tab>
            </TabRow>
          </CenterColumn>

          <Column>
            <Section>
              <PanelCaption title="命令" />
              <CommandPane>
                <SelectWrap>
                  <CommandSelect aria-label="命令类别" defaultValue="all">
                    <option value="all">全部命令</option>
                  </CommandSelect>
                  <svg width="7" height="4" viewBox="0 0 7 4"><path d="M0 0h7L4 4H3z" /></svg>
                </SelectWrap>
                <PanelTools role="toolbar" aria-label="命令">
                  <Tool aria-label="新建命令"><Icon name="newCmd" /></Tool>
                  <Tool $off aria-label="删除命令"><Icon name="delCmd" /></Tool>
                  <Separator />
                  <Tool $off aria-label="上移"><Icon name="up" /></Tool>
                  <Tool $off aria-label="下移"><Icon name="down" /></Tool>
                  <Separator />
                  <Tool aria-label="向导"><Icon name="magic" /></Tool>
                  <Tool $slim aria-label="更多"><Icon name="drop" width={5} /></Tool>
                </PanelTools>
                <CommandBox>
                  <CommandList>
                    {commands.map(c => (
                      <li key={c.text}>
                        <Command>
                          <CommandIcon>{c.icon && <Icon name={c.icon} />}</CommandIcon>
                          <CommandLabel>{c.text}</CommandLabel>
                          {c.sub && (
                            <svg width="12" height="12" viewBox="0 0 12 12"><path d="M2 1l6 5-6 5z" /></svg>
                          )}
                        </Command>
                      </li>
                    ))}
                  </CommandList>
                  <Scroll>
                    <Arrow dir="up" label="向上" color="#444" />
                    <Thumb />
                    <Arrow dir="down" label="向下" color="#444" />
                  </Scroll>
                </CommandBox>
              </CommandPane>
            </Section>
            <TabRow role="tablist" $close>
              <Tab role="tab"><Icon name="project" />项目</Tab>
              <Tab role="tab" $active><Icon name="command" />命令</Tab>
            </TabRow>
          </Column>

          <SideStrip>
            <SideGroup>
              <SideTab><Icon name="tools" /><SideLabel>工具箱</SideLabel></SideTab>
            </SideGroup>
            <SideGroup>
              <SideTab $rule aria-label="网格"><Icon name="gridPage" /></SideTab>
              <SideTab><Icon name="keys" /><SideLabel>快捷键</SideLabel></SideTab>
            </SideGroup>
          </SideStrip>
        </Workspace>

        <StatusBar>
          <StatusText>若要获取帮助，请按 F1</StatusText>
          <Pane $w={166} />
          <Pane $w={166} />
          <Pane $w={29} />
          <Pane $w={37}>NUM</Pane>
          <Pane $w={35} />
          <SizeGrip>
            <svg width="12" height="12" viewBox="0 0 12 12">
              <path fill="#b8b8b8" d="M8 0h2v2h-2z M4 4h2v2h-2z M8 4h2v2h-2z M0 8h2v2h-2z M4 8h2v2h-2z M8 8h2v2h-2z" />
            </svg>
          </SizeGrip>
        </StatusBar>
      </Client>
    </Frame>
  );
}
